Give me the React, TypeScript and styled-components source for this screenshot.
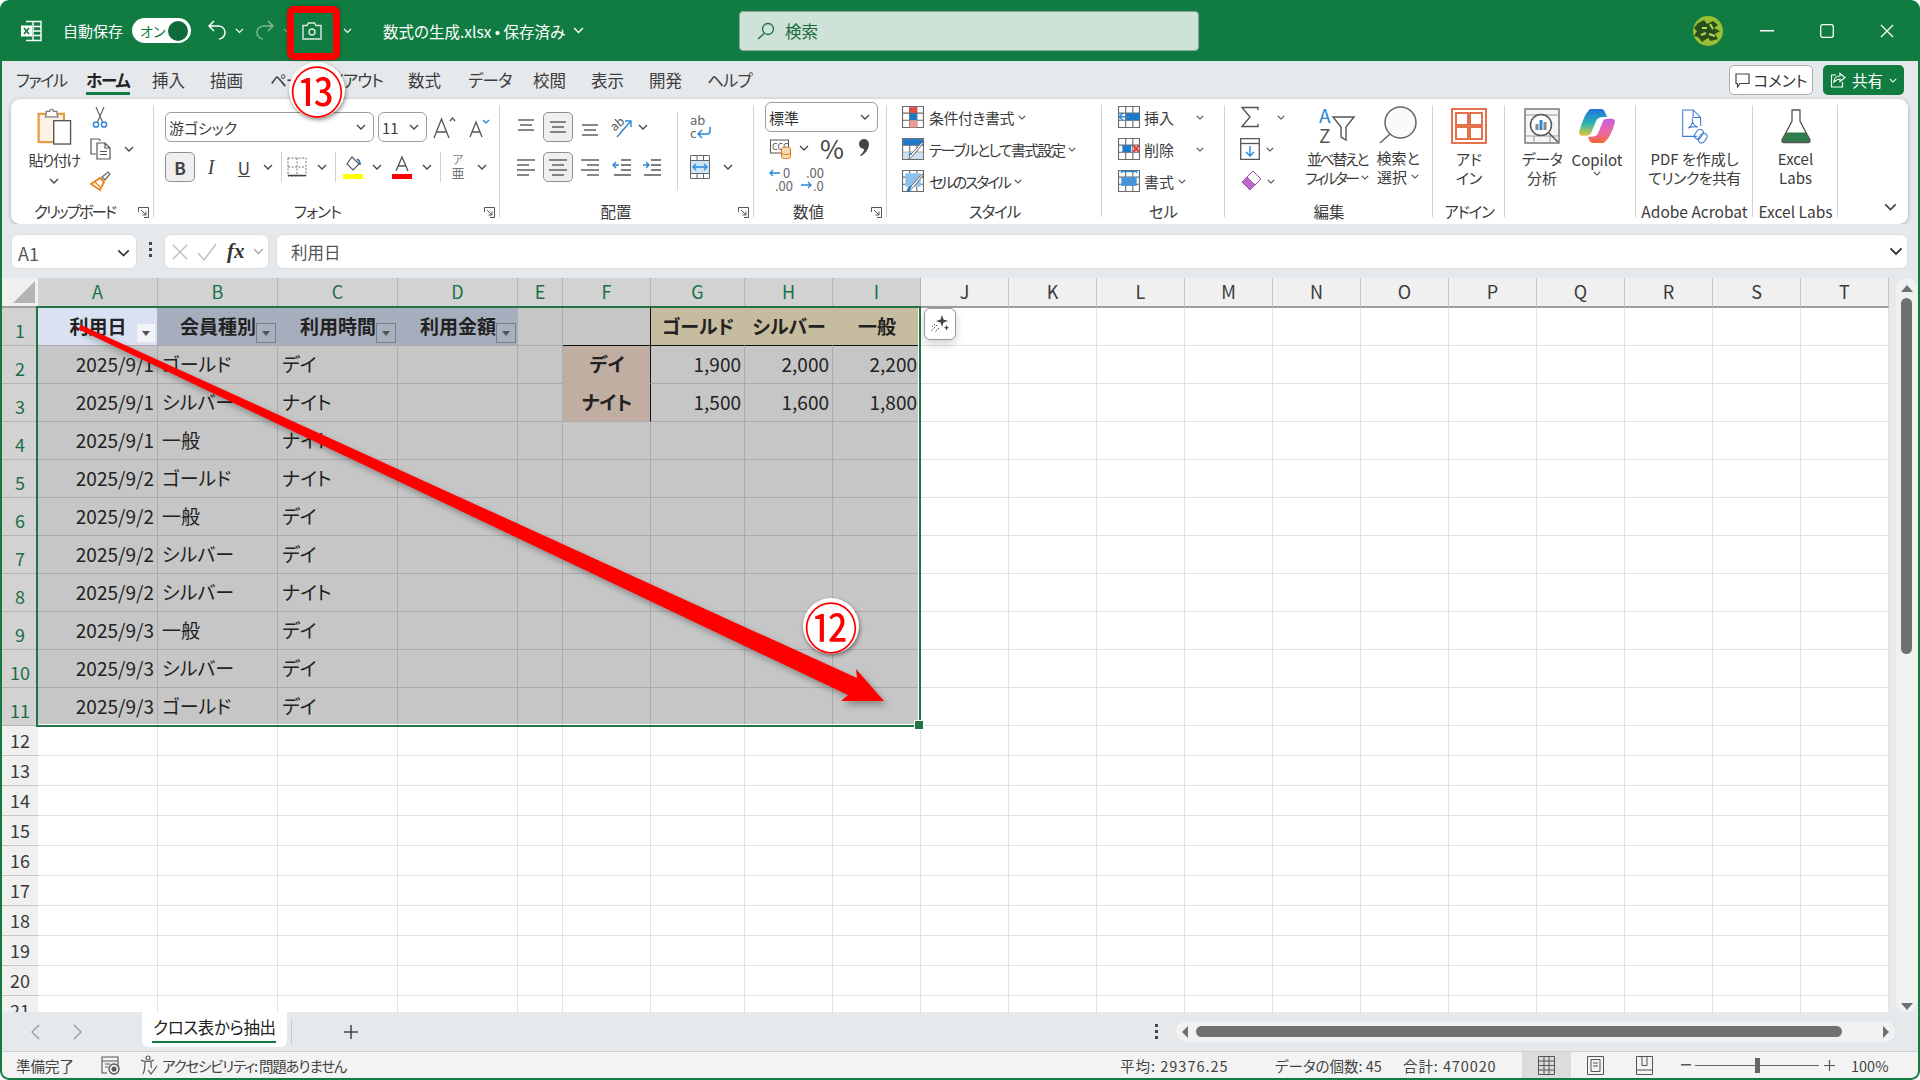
import React from 'react'
import styled, { createGlobalStyle } from 'styled-components'

const GlobalStyle = createGlobalStyle`
    html, body {
        margin: 0;
        padding: 0;
        background: #fff;
    }
    body {
        font-family: "Noto Sans CJK JP", "Noto Sans", sans-serif;
        font-feature-settings: "palt";
        color: #333;
    }
    * {
        box-sizing: border-box;
    }
    svg {
        display: block;
        flex: none;
        overflow: visible;
    }
`

const GREEN = '#107c41'
const CHROME = '#e6e9eb'

const Page = styled.div`
    position: relative;
    width: 1920px;
    height: 1080px;
    overflow: hidden;
`

const Window = styled.div`
    display: flex;
    flex-direction: column;
    width: 100%;
    height: 100%;
    padding: 0 2px 2px;
    background: ${GREEN};
    border-radius: 9px;
`

/* kana in the reference font is narrower, this pulls it in */
const Tight = styled.span<{ $ls: number }>`
    letter-spacing: ${p => p.$ls}px;
`

/* title bar */
const TitleBar = styled.header`
    display: flex;
    align-items: center;
    flex: none;
    height: 61px;
    color: #fff;
    font-size: 15px;
`

const TitleItem = styled.div<{ $left?: number; $w?: number; $dim?: boolean; $start?: boolean }>`
    display: flex;
    align-items: center;
    justify-content: ${p => (p.$w && !p.$start ? 'center' : 'flex-start')};
    flex: none;
    gap: 8px;
    width: ${p => (p.$w ? `${p.$w}px` : 'auto')};
    margin-left: ${p => p.$left || 0}px;
    opacity: ${p => (p.$dim ? 0.45 : 1)};
    white-space: nowrap;
`

const DocName = styled.span`
    font-size: 15.5px;
`

const Toggle = styled.div`
    display: flex;
    align-items: center;
    justify-content: space-between;
    flex: none;
    width: 59px;
    height: 25px;
    margin-left: 9px;
    padding: 0 3px 0 8px;
    color: ${GREEN};
    font-size: 14px;
    background: #fff;
    border-radius: 13px;
    i {
        width: 20px;
        height: 20px;
        background: #0e6b39;
        border-radius: 50%;
    }
`

const SearchBox = styled.div`
    display: flex;
    align-items: center;
    gap: 10px;
    flex: none;
    width: 460px;
    height: 40px;
    padding-left: 17px;
    color: #1c6b41;
    font-size: 16.5px;
    background: #cfe2d7;
    border: 1px solid #8ba598;
    border-radius: 4px;
`

/* tab row */
const TabRow = styled.nav`
    display: flex;
    align-items: center;
    flex: none;
    height: 38px;
    padding-left: 14px;
    background: ${CHROME};
`

const Tab = styled.div<{ $active?: boolean; $w: number; $ls?: number }>`
    position: relative;
    flex: none;
    width: ${p => p.$w}px;
    height: 38px;
    font-size: 16.5px;
    line-height: 38px;
    letter-spacing: ${p => p.$ls || 0}px;
    font-weight: ${p => (p.$active ? 700 : 400)};
    color: ${p => (p.$active ? '#222' : '#3c3c3c')};
    white-space: nowrap;
    &::after {
        content: "";
        display: ${p => (p.$active ? 'block' : 'none')};
        position: absolute;
        left: 0;
        width: 44px;
        bottom: 4px;
        height: 3px;
        background: ${GREEN};
    }
`

const RowActions = styled.div`
    display: flex;
    gap: 10px;
    margin-left: auto;
    margin-right: 14px;
`

const CommentBtn = styled.div`
    display: flex;
    align-items: center;
    justify-content: center;
    gap: 4px;
    width: 84px;
    height: 30px;
    font-size: 15.5px;
    color: #333;
    background: #fff;
    border: 1px solid #a9adb0;
    border-radius: 5px;
`

const ShareBtn = styled(CommentBtn)`
    width: 81px;
    gap: 6px;
    color: #fff;
    background: ${GREEN};
    border: none;
`

/* ribbon */
const RibbonWrap = styled.div`
    flex: none;
    height: 125px;
    padding: 0 10px 0 9px;
    background: ${CHROME};
`

const Ribbon = styled.section`
    display: flex;
    height: 125px;
    padding-top: 2px;
    background: #fff;
    border-radius: 9px;
    box-shadow: 0 1px 4px rgba(0, 0, 0, 0.25);
`

const Group = styled.div<{ $w: number; $noline?: boolean }>`
    position: relative;
    display: flex;
    flex-direction: column;
    flex: none;
    width: ${p => p.$w}px;
    height: 122px;
    &::after {
        content: "";
        display: ${p => (p.$noline ? 'none' : 'block')};
        position: absolute;
        right: 0;
        top: 4px;
        width: 1px;
        height: 112px;
        background: #d2d2d2;
    }
`

const Body = styled.div<{ $pl?: number; $pt?: number }>`
    display: flex;
    flex: none;
    height: 100px;
    padding-left: ${p => p.$pl || 0}px;
    padding-top: ${p => p.$pt || 0}px;
`

const GroupLabel = styled.div<{ $ls?: number; $pr?: number }>`
    height: 20px;
    padding-right: ${p => p.$pr || 0}px;
    font-size: 15.5px;
    line-height: 20px;
    letter-spacing: ${p => p.$ls || 0}px;
    text-align: center;
    white-space: nowrap;
    color: #3c3c3c;
`

const Launcher = styled.div`
    position: absolute;
    right: 5px;
    bottom: 5px;
`

const MoreChevron = styled(Launcher)`
    right: 12px;
    bottom: 12px;
`

const Column = styled.div<{ $w?: number; $gap?: number }>`
    display: flex;
    flex-direction: column;
    flex: none;
    gap: ${p => p.$gap || 0}px;
    width: ${p => (p.$w ? `${p.$w}px` : 'auto')};
`

const RuledColumn = styled(Column)`
    height: 78px;
    padding-left: 10px;
    border-left: 1px solid #d2d2d2;
`

const Line = styled.div<{ $h?: number }>`
    display: flex;
    align-items: center;
    flex: none;
    height: ${p => p.$h || 32}px;
    font-size: 15px;
    white-space: nowrap;
    color: #3c3c3c;
`

const Slot = styled.div<{ $w: number; $on?: boolean; $ml?: number }>`
    display: flex;
    align-items: center;
    justify-content: center;
    flex: none;
    width: ${p => p.$w}px;
    height: 30px;
    margin-left: ${p => p.$ml || 0}px;
    color: #444;
    background: ${p => (p.$on ? '#efefef' : 'transparent')};
    border: ${p => (p.$on ? '1px solid #8f8f8f' : 'none')};
    border-radius: 5px;
    font-size: 15px;
`

const Divider = styled.div<{ $ml?: number }>`
    flex: none;
    width: 1px;
    height: 30px;
    margin-left: ${p => p.$ml || 0}px;
    background: #d2d2d2;
`

const Select = styled.div<{ $w: number; $ml?: number }>`
    display: flex;
    align-items: center;
    justify-content: space-between;
    flex: none;
    width: ${p => p.$w}px;
    height: 30px;
    margin-left: ${p => p.$ml || 0}px;
    padding: 0 7px 0 3px;
    font-size: 15px;
    background: #fff;
    border: 1px solid #9e9e9e;
    border-radius: 6px;
`

const Big = styled.div<{ $w: number; $pt?: number; $ml?: number }>`
    display: flex;
    flex-direction: column;
    align-items: center;
    flex: none;
    width: ${p => p.$w}px;
    margin-left: ${p => p.$ml || 0}px;
    padding-top: ${p => (p.$pt === undefined ? 7 : p.$pt)}px;
    font-size: 15px;
    line-height: 19px;
    text-align: center;
    color: #3c3c3c;
    white-space: nowrap;
`

const BigIcon = styled.div`
    display: flex;
    align-items: center;
    justify-content: center;
    height: 36px;
    margin-bottom: 5px;
`

const BigNote = styled.span<{ $mt: number }>`
    margin-top: ${p => p.$mt}px;
`

const Inline = styled.span<{ $ml?: number; $w?: number }>`
    display: inline-flex;
    align-items: center;
    gap: 4px;
    margin-left: ${p => p.$ml || 0}px;
    width: ${p => (p.$w ? `${p.$w}px` : 'auto')};
`

const PctGlyph = styled.span`
    font-size: 26px;
    line-height: 30px;
    color: #444;
`

const BoldGlyph = styled.b`
    font-size: 17px;
`

const ItalicGlyph = styled.i`
    font-family: "Liberation Serif", serif;
    font-size: 20px;
`

const UnderGlyph = styled.u`
    font-size: 17px;
`

/* formula bar */
const FormulaBar = styled.div`
    display: flex;
    align-items: flex-start;
    flex: none;
    height: 54px;
    padding: 10px 10px 0 9px;
    background: ${CHROME};
`

const FormulaBox = styled.div`
    display: flex;
    align-items: center;
    height: 35px;
    background: #fff;
    border: 1px solid #dcdfe1;
    border-radius: 7px;
    font-size: 16.5px;
    color: #555;
`

const NameBox = styled(FormulaBox)`
    justify-content: space-between;
    flex: none;
    width: 126px;
    padding: 3px 6px 0;
    font-size: 18px;
`

const FnBox = styled(FormulaBox)`
    flex: none;
    gap: 8px;
    width: 105px;
    padding: 0 6px;
    i {
        margin-left: 2px;
        font-family: "Liberation Serif", serif;
        font-weight: 700;
        font-size: 21px;
        color: #333;
    }
`

const InputBox = styled(FormulaBox)`
    justify-content: space-between;
    flex: 1;
    margin-left: 7px;
    padding: 0 4px 0 14px;
`

const Dots = styled.div<{ $w: number }>`
    display: flex;
    flex-direction: column;
    align-items: center;
    justify-content: center;
    gap: 3px;
    flex: none;
    width: ${p => p.$w}px;
    min-height: 30px;
    i {
        width: 3px;
        height: 3px;
        background: #444;
    }
`

/* sheet grid */
const SheetArea = styled.div`
    display: flex;
    flex: none;
    height: 734px;
    background: ${CHROME};
`

const GridClip = styled.div`
    position: relative;
    flex: none;
    width: 1887px;
    height: 734px;
    overflow: hidden;
    background: #fff;
`

const COLS = ['A', 'B', 'C', 'D', 'E', 'F', 'G', 'H', 'I', 'J', 'K', 'L', 'M', 'N', 'O', 'P', 'Q', 'R', 'S', 'T']
const COL_W = [120, 120, 120, 120, 45, 88, 94, 88, 88, 88, 88, 88, 88, 88, 88, 88, 88, 88, 88, 88]

const Grid = styled.div`
    display: grid;
    grid-template-columns: 36px ${COL_W.map(w => `${w}px`).join(' ')};
    grid-template-rows: 30px repeat(11, 38px) repeat(10, 30px);
    font-size: 19px;
`

const Corner = styled.div`
    display: flex;
    align-items: flex-end;
    justify-content: flex-end;
    padding: 0 3px 3px 0;
    background: #f0f0f0;
    border-bottom: 2px solid #9e9e9e;
    i {
        width: 0;
        height: 0;
        border-left: 22px solid transparent;
        border-bottom: 22px solid #b4b4b4;
    }
`

const ColHead = styled.div<{ $sel: boolean }>`
    display: flex;
    align-items: center;
    justify-content: center;
    padding-bottom: 2px;
    font-size: 18px;
    color: ${p => (p.$sel ? '#1c6e46' : '#3a3a3a')};
    background: ${p => (p.$sel ? '#d2d2d2' : '#f0f0f0')};
    border-right: 1px solid ${p => (p.$sel ? '#b4b4b4' : '#c6c6c6')};
    border-bottom: 2px solid ${p => (p.$sel ? '#217346' : '#9e9e9e')};
`

const RowHead = styled.div<{ $sel: boolean }>`
    display: flex;
    align-items: flex-end;
    justify-content: center;
    padding-bottom: 2px;
    font-size: 18px;
    line-height: 26px;
    color: ${p => (p.$sel ? '#1c6e46' : '#3a3a3a')};
    background: ${p => (p.$sel ? '#d2d2d2' : '#f0f0f0')};
    border-bottom: 1px solid ${p => (p.$sel ? '#b4b4b4' : '#c6c6c6')};
`

const Cell = styled.div<{ $bg: string; $line: string; $align: string; $bold?: boolean; $rule?: string }>`
    position: relative;
    display: flex;
    align-items: center;
    justify-content: ${p => p.$align};
    padding: 0 3px 2px 4px;
    overflow: visible;
    white-space: nowrap;
    color: #222;
    font-weight: ${p => (p.$bold ? 700 : 400)};
    background: ${p => p.$bg};
    border-right: 1px solid ${p => p.$line};
    border-bottom: 1px solid ${p => p.$line};
    ${p => p.$rule || ''}
`

const FilterBtn = styled.span<{ $first?: boolean }>`
    position: absolute;
    right: 1px;
    bottom: 2px;
    display: flex;
    align-items: center;
    justify-content: center;
    width: 20px;
    height: 20px;
    background: ${p => (p.$first ? '#f2f4f8' : '#a8afbe')};
    border: 1px solid ${p => (p.$first ? '#d9e1f2' : '#7b7f88')};
    &::after {
        content: "";
        border-left: 4px solid transparent;
        border-right: 4px solid transparent;
        border-top: 5px solid #555;
    }
`

const Selection = styled.div`
    position: absolute;
    left: 34px;
    top: 28px;
    width: 885px;
    height: 421px;
    border: 2px solid #217346;
    box-shadow: inset -1px -1px 0 #fff;
    pointer-events: none;
    &::after {
        content: "";
        position: absolute;
        right: -5px;
        bottom: -5px;
        width: 8px;
        height: 8px;
        background: #217346;
        border: 1px solid #fff;
    }
`

const QuickBtn = styled.div`
    position: absolute;
    left: 922px;
    top: 30px;
    display: flex;
    align-items: center;
    justify-content: center;
    width: 32px;
    height: 32px;
    background: #fff;
    border: 1px solid #9a9a9a;
    border-radius: 6px;
    box-shadow: 0 4px 10px rgba(0, 0, 0, 0.18);
`

const VScroll = styled.div`
    display: flex;
    flex-direction: column;
    align-items: center;
    flex: none;
    width: 21px;
    height: 734px;
    margin-left: 7px;
    padding: 7px 0 2px;
    background: #f1f1f1;
    border-radius: 10px;
`

const VThumb = styled.div`
    flex: none;
    width: 11px;
    height: 356px;
    margin-top: 6px;
    margin-bottom: auto;
    background: #707070;
    border-radius: 6px;
`

const Arrowhead = styled.i<{ $dir: 'up' | 'down' | 'left' | 'right' }>`
    display: block;
    flex: none;
    width: 0;
    height: 0;
    ${p => p.$dir === 'up' && 'border-left: 6px solid transparent; border-right: 6px solid transparent; border-bottom: 7px solid #707070;'}
    ${p => p.$dir === 'down' && 'border-left: 6px solid transparent; border-right: 6px solid transparent; border-top: 7px solid #707070;'}
    ${p => p.$dir === 'left' && 'border-top: 6px solid transparent; border-bottom: 6px solid transparent; border-right: 6px solid #707070;'}
    ${p => p.$dir === 'right' && 'border-top: 6px solid transparent; border-bottom: 6px solid transparent; border-left: 6px solid #707070;'}
`

/* sheet tabs */
const SheetBar = styled.div`
    display: flex;
    align-items: center;
    flex: none;
    height: 40px;
    background: ${CHROME};
    border-bottom: 1px solid #cfcfcf;
`

const NavSlot = styled.div<{ $w: number; $left?: number }>`
    display: flex;
    justify-content: center;
    flex: none;
    width: ${p => p.$w}px;
    margin-left: ${p => p.$left || 0}px;
`

const SheetTab = styled.div`
    position: relative;
    flex: none;
    align-self: flex-start;
    width: 145px;
    height: 35px;
    margin-left: 58px;
    padding-top: 2px;
    font-size: 16.5px;
    line-height: 26px;
    letter-spacing: -0.4px;
    text-align: center;
    color: #222;
    background: #fff;
    border-radius: 0 0 7px 7px;
    &::after {
        content: "";
        position: absolute;
        left: 10px;
        right: 11px;
        bottom: 4px;
        height: 2px;
        background: ${GREEN};
    }
`

const TabDivider = styled.div`
    flex: none;
    width: 1px;
    height: 25px;
    margin-left: 4px;
    background: #c8c8c8;
`

const HScroll = styled.div`
    display: flex;
    align-items: center;
    justify-content: space-between;
    flex: none;
    width: 719px;
    height: 21px;
    margin-left: 15px;
    padding: 0 6px;
    background: #f1f1f1;
    border-radius: 10px;
`

const HThumb = styled.div`
    flex: none;
    width: 646px;
    height: 11px;
    margin-left: 8px;
    margin-right: auto;
    background: #707070;
    border-radius: 6px;
`

/* status bar */
const StatusBar = styled.footer`
    display: flex;
    align-items: center;
    flex: none;
    height: 26px;
    font-size: 14.5px;
    color: #444;
    background: #f3f3f3;
    border-radius: 0 0 7px 7px;
`

const StatusItem = styled.div<{ $left?: number; $w?: number }>`
    display: flex;
    align-items: center;
    flex: none;
    gap: 4px;
    margin-left: ${p => p.$left || 0}px;
    width: ${p => (p.$w ? `${p.$w}px` : 'auto')};
    white-space: nowrap;
`

const ViewBtn = styled.div<{ $on?: boolean }>`
    display: flex;
    align-items: center;
    justify-content: center;
    flex: none;
    width: 49px;
    height: 26px;
    background: ${p => (p.$on ? '#dcdcdc' : 'transparent')};
`

const Slider = styled.div`
    position: relative;
    flex: none;
    width: 124px;
    height: 1px;
    margin: 0 5px 0 4px;
    background: #666;
    &::after {
        content: "";
        position: absolute;
        left: 60px;
        top: -7px;
        width: 5px;
        height: 15px;
        background: #666;
    }
`

/* annotations */
const RedFrame = styled.div`
    position: absolute;
    left: 287px;
    top: 6px;
    width: 53px;
    height: 54px;
    border: 7px solid #f00;
    border-radius: 7px;
    box-shadow: 0 0 3px rgba(0, 0, 0, 0.35);
`

const StepBadge = styled.div<{ $x: number; $y: number }>`
    position: absolute;
    left: ${p => p.$x - 28}px;
    top: ${p => p.$y - 28}px;
    display: flex;
    align-items: center;
    justify-content: center;
    width: 56px;
    height: 56px;
    font-size: 54px;
    line-height: 56px;
    color: #f00;
    background: #fff;
    border-radius: 50%;
    box-shadow: 1px 2px 4px rgba(0, 0, 0, 0.45);
`

const ArrowLayer = styled.svg`
    position: absolute;
    left: 0;
    top: 0;
    filter: drop-shadow(3px 4px 3px rgba(0, 0, 0, 0.3));
`

/* icons */
const Chevron = ({ c = '#444', w = 10 }: { c?: string; w?: number }) => (
    <svg width={w} height={w * 0.6} viewBox="0 0 10 6">
        <path d="M1 1l4 4 4-4" fill="none" stroke={c} strokeWidth="1.3" />
    </svg>
)

const LauncherIcon = () => (
    <svg width="11" height="11" viewBox="0 0 11 11" fill="none" stroke="#555">
        <path d="M.5 5V.5H10.500V10.500H6M3 3l5 5M8 4.500V8H4.500" />
    </svg>
)

const Lines = ({ items }: { items: number[][] }) => (
    <svg width="20" height="20" viewBox="0 0 20 20" stroke="#555" strokeWidth="1.4">
        {items.map(([a, b, y], i) => (
            <line key={i} x1={a} x2={b} y1={y} y2={y} />
        ))}
    </svg>
)

const Table = ({ children, size = 22 }: { children?: React.ReactNode; size?: number }) => (
    <svg width={size} height={size} viewBox="0 0 20 20" fill="none">
        <path d="M.5.5h19v19H.5zM.5 6.500h19M.5 13h19M7 .5v19M13.500 .5v19" stroke="#6b6b6b" />
        {children}
    </svg>
)

const ExcelLogo = () => (
    <svg width="22" height="22" viewBox="0 0 22 22" fill="none">
        <path d="M6 1.500h15v19H6" stroke="#fff" strokeWidth="1.400" />
        <path d="M13 1.500v19M13 6.500h8M13 11h8M13 15.500h8" stroke="#fff" strokeWidth="1.400" />
        <rect x="1" y="5.500" width="11" height="11" fill="#fff" />
        <path d="M4 8l5 6M9 8l-5 6" stroke="#107c41" strokeWidth="1.700" />
    </svg>
)

const UndoIcon = () => (
    <svg width="20" height="24" viewBox="0 0 20 24" fill="none" stroke="#fff" strokeWidth="1.500">
        <path d="M7 2L2 7l5 5M2 7h9a6.500 6.500 0 0 1 1 13" />
    </svg>
)

const RedoIcon = () => (
    <svg width="20" height="24" viewBox="0 0 20 24" fill="none" stroke="#fff" strokeWidth="1.500">
        <path d="M13 2l5 5-5 5M18 7H9a6.500 6.500 0 0 0-1 13" />
    </svg>
)

const CameraIcon = () => (
    <svg width="20" height="18" viewBox="0 0 20 18" fill="none" stroke="#dfe9e3" strokeWidth="1.400">
        <path d="M1 3.500h4l1.500-2.500h6L14 3.500h5v13.500H1z" />
        <circle cx="10" cy="10" r="3" />
    </svg>
)

const MagnifierIcon = () => (
    <svg width="18" height="18" viewBox="0 0 18 18" fill="none" stroke="#1c6b41" strokeWidth="1.300">
        <circle cx="11" cy="7" r="5.500" />
        <path d="M7 11.500L1 17" />
    </svg>
)

const AvatarIcon = () => (
    <svg width="30" height="30" viewBox="0 0 30 30">
        <circle cx="15" cy="15" r="15" fill="#9abf34" />
        <path d="M5 7l6-3 3 4 6-3 5 4-4 3 6 3-5 3 3 5-7 2-3-3-6 4-4-5-4-1 3-5-3-3z" fill="#274f1c" />
        <path d="M9 12h5M17 8l3 5M8 19l5-2M16 18l6 2" stroke="#b7d660" strokeWidth="2" />
    </svg>
)

const WinMin = () => (
    <svg width="14" height="2" viewBox="0 0 14 2"><rect width="14" height="1.500" fill="#fff" /></svg>
)

const WinMax = () => (
    <svg width="14" height="14" viewBox="0 0 14 14" fill="none" stroke="#fff" strokeWidth="1.300"><rect x=".7" y=".7" width="12.600" height="12.600" rx="2" /></svg>
)

const WinClose = () => (
    <svg width="14" height="14" viewBox="0 0 14 14" stroke="#fff" strokeWidth="1.300"><path d="M1 1l12 12M13 1L1 13" /></svg>
)

const CommentIcon = () => (
    <svg width="15" height="15" viewBox="0 0 15 15" fill="none" stroke="#444" strokeWidth="1.200"><path d="M1 1h13v9.500H5L2.500 14v-3.500H1z" /></svg>
)

const ShareIcon = () => (
    <svg width="16" height="16" viewBox="0 0 16 16" fill="none" stroke="#fff" strokeWidth="1.200"><path d="M6 3H1.500v12h11v-5M4 10c0-4 3-6 6-6V1.500L15 5.500l-5 4V7c-2 0-4 1-6 3z" /></svg>
)

const PasteIcon = () => (
    <svg width="35" height="37" viewBox="0 0 35 38">
        <rect x="1.200" y="6" width="26" height="29" fill="#fbf3e4" stroke="#e8993c" strokeWidth="2.200" />
        <path d="M9 6V3.500h3.500a2 2 0 0 1 4 0H20V6l1 3H8z" fill="#fff" stroke="#7d7d7d" strokeWidth="1.300" />
        <rect x="16.700" y="13" width="17.300" height="24" fill="#fff" stroke="#555" strokeWidth="1.400" />
    </svg>
)

const ScissorsIcon = () => (
    <svg width="16" height="22" viewBox="0 0 16 22" fill="none">
        <path d="M4 1l6.500 15M12 1L5.500 16" stroke="#666" strokeWidth="1.200" />
        <circle cx="4" cy="18.500" r="2.600" stroke="#2b88d8" strokeWidth="1.500" />
        <circle cx="12" cy="18.500" r="2.600" stroke="#2b88d8" strokeWidth="1.500" />
    </svg>
)

const CopyIcon = () => (
    <svg width="21" height="22" viewBox="0 0 21 22" fill="none" stroke="#555" strokeWidth="1.200">
        <path d="M6 16H1V1h8l1.500 2" />
        <path d="M7 5h8l5 5v11H7zM15 5v5h5M10 13.500h7M10 16.500h7" />
    </svg>
)

const BrushIcon = () => (
    <svg width="22" height="22" viewBox="0 0 22 22" fill="none">
        <path d="M13 7l3 3 5-6-2-2z" fill="#fff" stroke="#666" strokeWidth="1.200" />
        <path d="M11 8l4 4-4 8-9-6z" fill="#fff" stroke="#e8811a" strokeWidth="1.800" />
        <path d="M6 12l5 5" stroke="#e8811a" strokeWidth="1.200" />
    </svg>
)

const GrowIcon = ({ down }: { down?: boolean }) => (
    <svg width="24" height="24" viewBox="0 0 24 24" fill="none" stroke="#555" strokeWidth="1.300">
        {down ? <path d="M4 22L10 7l6 15M6 17h8" /> : <path d="M2 23L9.500 4 17 23M4.500 17h10" />}
        <path d={down ? 'M17 5l3 3 3-3' : 'M18 6l2.500-3 2.500 3'} stroke={down ? '#2b88d8' : '#555'} />
    </svg>
)

const BorderIcon = () => (
    <svg width="20" height="20" viewBox="0 0 20 20" fill="none">
        <path d="M1 1h18v18H1zM10 1v18M1 10h18" stroke="#777" strokeDasharray="2 1.500" />
        <path d="M1 18.500h18" stroke="#444" strokeWidth="1.500" />
    </svg>
)

const FillIcon = () => (
    <svg width="20" height="24" viewBox="0 0 20 24">
        <path d="M9 2l7 7-6 6-6-6z" fill="none" stroke="#555" strokeWidth="1.200" />
        <path d="M14 4c2 1 3 3 3 6" fill="none" stroke="#2b72b8" strokeWidth="1.800" />
        <rect y="19" width="20" height="5" fill="#ffff00" />
    </svg>
)

const FontColorIcon = () => (
    <svg width="20" height="24" viewBox="0 0 20 24" fill="none">
        <path d="M4 16L10 2l6 14M6 11h8" stroke="#555" strokeWidth="1.300" />
        <rect y="19" width="20" height="5" fill="#f00" />
    </svg>
)

const PhoneticIcon = () => (
    <svg width="20" height="26" viewBox="0 0 20 26">
        <text x="10" y="10" fontSize="11" fill="#777" textAnchor="middle">ア</text>
        <text x="10" y="24" fontSize="13" fill="#777" textAnchor="middle">亜</text>
    </svg>
)

const OrientIcon = () => (
    <svg width="24" height="24" viewBox="0 0 24 24" fill="none">
        <text x="1" y="13" fontSize="12" fill="#555" transform="rotate(-40 8 10)">ab</text>
        <path d="M7 22L20 7M15 6h6v6" stroke="#2b88d8" strokeWidth="1.400" />
    </svg>
)

const IndentIcon = ({ out }: { out?: boolean }) => (
    <svg width="20" height="20" viewBox="0 0 20 20" fill="none" strokeWidth="1.400">
        <path d="M9 3h10M9 8h10M9 13h10M2 18h17" stroke="#555" />
        <path d={out ? 'M7 8H1M4 5L1 8l3 3' : 'M1 8h6M4 5l3 3-3 3'} stroke="#2b88d8" />
    </svg>
)

const WrapIcon = () => (
    <svg width="24" height="26" viewBox="0 0 24 26" fill="none">
        <text x="2" y="11" fontSize="13" fill="#666">ab</text>
        <text x="2" y="24" fontSize="13" fill="#666">c</text>
        <path d="M22 13v4a3 3 0 0 1-3 3h-8M14 16l-4 4 4 4" stroke="#2b88d8" strokeWidth="1.500" />
    </svg>
)

const MergeIcon = () => (
    <svg width="20" height="24" viewBox="0 0 20 24" fill="none">
        <path d="M.5.5h19v23H.5zM.5 5.500h19M.5 18.500h19M7 .5v5M13.500 .5v5M7 18.500v5M13.500 18.500v5" stroke="#666" />
        <rect x="1" y="6" width="18" height="12" fill="#cde6f7" />
        <path d="M3 12h14M6 9l-3 3 3 3M14 9l3 3-3 3" stroke="#2b88d8" strokeWidth="1.300" />
    </svg>
)

const CurrencyIcon = () => (
    <svg width="22" height="24" viewBox="0 0 22 24" fill="none">
        <rect x=".5" y="4" width="18" height="13" stroke="#555" />
        <text x="2" y="14" fontSize="9" fill="#555">CCC</text>
        <ellipse cx="16" cy="13" rx="4.500" ry="2" fill="#f6dcb4" stroke="#e07b14" />
        <path d="M11.500 13v8c0 2 9 2 9 0v-8M11.500 17c0 2 9 2 9 0" fill="#f6dcb4" stroke="#e07b14" />
    </svg>
)

const CommaIcon = () => (
    <svg width="14" height="22" viewBox="0 0 14 22">
        <path d="M7 2a5 5 0 0 1 5 5c0 5-4 10-8 12l-1-1c3-2 4-4 4-6a5 5 0 0 1 0-10z" fill="#444" />
    </svg>
)

const DecimalIcon = ({ more }: { more?: boolean }) => (
    <svg width="24" height="26" viewBox="0 0 24 26" fill="none">
        <text x={more ? 6 : 14} y="11" fontSize="13" fill="#666">{more ? '.00' : '0'}</text>
        <text x={more ? 13 : 6} y="24" fontSize="13" fill="#666">{more ? '.0' : '.00'}</text>
        <path d={more ? 'M1 18h10M8 15l3 3-3 3' : 'M11 6H1M4 3L1 6l3 3'} stroke="#2b88d8" strokeWidth="1.300" />
    </svg>
)

const CondIcon = () => (
    <Table>
        <rect x="7" y="1" width="6.500" height="5.500" fill="#e5483f" />
        <rect x="7" y="6.500" width="6.500" height="6.500" fill="#1f78c8" />
        <rect x="7" y="13" width="6.500" height="6.500" fill="#f29a97" />
    </Table>
)

const TableFmtIcon = () => (
    <Table>
        <rect x="1" y="1" width="18" height="5.500" fill="#1f78c8" />
        <rect x="1" y="13" width="18" height="6" fill="#cde0f2" />
        <path d="M20 4L9 17l-3 3 1-4L18 4z" fill="#fff" stroke="#555" strokeWidth=".8" />
        <path d="M9 15l-3 1 1-3z" fill="#1f78c8" />
    </Table>
)

const CellStyleIcon = () => (
    <Table>
        <rect x="3" y="3" width="14" height="12" fill="#8ec0ea" />
        <path d="M20 4L9 17l-3 3 1-4L18 4z" fill="#fff" stroke="#555" strokeWidth=".8" />
        <path d="M9 15l-3 5-2-1 2-4z" fill="#1f78c8" />
    </Table>
)

const InsertIcon = () => (
    <Table>
        <rect x="7" y="6.500" width="13" height="6.500" fill="#1f78c8" />
        <path d="M11 9.700H1M4.500 6.500L1 9.700 4.500 13" stroke="#2b88d8" strokeWidth="1.300" />
    </Table>
)

const DeleteIcon = () => (
    <Table>
        <rect x="4" y="6.500" width="8" height="6.500" fill="#1f78c8" />
        <path d="M14 7l5 5.500M19 7l-5 5.500" stroke="#e5312b" strokeWidth="1.800" />
    </Table>
)

const FormatIcon = () => (
    <Table>
        <rect x="3" y="6.500" width="14" height="8" fill="#4a94d8" />
        <path d="M3 0v3M17 0v3M3 1.500h14" stroke="#2b88d8" />
    </Table>
)

const SumIcon = () => (
    <svg width="20" height="22" viewBox="0 0 20 22" fill="none" stroke="#555" strokeWidth="1.400">
        <path d="M18 4V1.500H2L10 11 2 20.500h16V18" />
    </svg>
)

const FillDownIcon = () => (
    <svg width="20" height="22" viewBox="0 0 20 22" fill="none">
        <path d="M.7.700h18.600v20.600H.7z" stroke="#555" strokeWidth="1.300" />
        <path d="M1 5.500h18" stroke="#555" strokeWidth="1.300" />
        <path d="M10 8v10M6 14l4 4 4-4" stroke="#2b88d8" strokeWidth="1.400" />
    </svg>
)

const EraserIcon = () => (
    <svg width="22" height="22" viewBox="0 0 22 22">
        <path d="M13 1l8 8-6 6-8-8z" fill="#fff" stroke="#a24ab0" />
        <path d="M7 7l8 8-5 5-8-8z" fill="#bb6bc9" stroke="#a24ab0" />
    </svg>
)

const SortIcon = () => (
    <svg width="36" height="36" viewBox="0 0 36 36" fill="none">
        <text x="0" y="15" fontSize="19" fill="#2b88d8">A</text>
        <text x="0" y="35" fontSize="19" fill="#555">Z</text>
        <path d="M14 9h21l-8 10v13l-5-3V19z" stroke="#555" strokeWidth="1.400" />
    </svg>
)

const SearchBigIcon = () => (
    <svg width="38" height="38" viewBox="0 0 38 38" fill="none">
        <circle cx="21.500" cy="16.500" r="15.500" fill="#fafafa" stroke="#666" strokeWidth="1.500" />
        <path d="M11 28L1 37" stroke="#666" strokeWidth="1.600" />
    </svg>
)

const AddinIcon = () => (
    <svg width="36" height="36" viewBox="0 0 36 36" fill="none" stroke="#e2633a" strokeWidth="1.800">
        <rect x="1" y="1" width="34" height="34" />
        <rect x="5" y="5" width="12" height="12" />
        <rect x="19" y="5" width="12" height="12" />
        <rect x="5" y="19" width="12" height="12" />
        <rect x="19" y="19" width="12" height="12" />
    </svg>
)

const AnalysisIcon = () => (
    <svg width="36" height="36" viewBox="0 0 36 36" fill="none">
        <rect x="1" y="1" width="34" height="34" fill="#f5f5f5" stroke="#777" strokeWidth="1.500" />
        <path d="M1 7h34M1 28h34M10 28v7M26 28v7" stroke="#999" />
        <circle cx="17" cy="17" r="10.500" fill="#fff" stroke="#555" strokeWidth="1.500" />
        <path d="M25 25l9 9" stroke="#555" strokeWidth="1.500" />
        <rect x="11.500" y="16" width="3" height="6" fill="#888" />
        <rect x="15.500" y="12" width="3" height="10" fill="#2b88d8" />
        <rect x="19.500" y="14" width="3" height="8" fill="#888" />
    </svg>
)

const CopilotIcon = () => (
    <svg width="36" height="34" viewBox="0 0 36 42" preserveAspectRatio="none">
        <defs>
            <linearGradient id="cpa" x1="0" y1="0" x2="0" y2="1">
                <stop offset="0" stopColor="#1e6fe0" />
                <stop offset=".55" stopColor="#2bb8b0" />
                <stop offset="1" stopColor="#e5c73b" />
            </linearGradient>
            <linearGradient id="cpb" x1="0" y1="0" x2="0" y2="1">
                <stop offset="0" stopColor="#c45ee0" />
                <stop offset=".6" stopColor="#f06aa0" />
                <stop offset="1" stopColor="#f2682a" />
            </linearGradient>
        </defs>
        <path d="M12 0h10c2 0 3 1 4 4l2 6c-6-1-10 1-11 5l-5 15c-1 2-2 3-5 3H3c-2 0-3-2-3-4C2 20 6 6 9 3c1-2 2-3 3-3z" fill="url(#cpa)" />
        <path d="M24 42H14c-2 0-3-1-4-4l-1-4c5 1 9 0 10-4l5-15c1-2 2-3 5-3h4c2 0 3 2 3 4-2 9-5 19-9 23-1 2-2 3-3 3z" fill="url(#cpb)" />
    </svg>
)

const PdfIcon = () => (
    <svg width="28" height="34" viewBox="0 0 28 36" fill="none" stroke="#3a78d4" strokeWidth="1.100">
        <path d="M16 29H1V1h11l8 8v9M12 1v8h8" />
        <path d="M7 20c3-2 5-6 4-10 0 4 2 8 6 9-4-1-7 0-10 1z" />
        <rect x="15" y="21" width="7" height="11" rx="3.500" transform="rotate(35 18 26)" />
        <rect x="19" y="25" width="7" height="11" rx="3.500" transform="rotate(35 22 30)" />
    </svg>
)

const FlaskIcon = () => (
    <svg width="30" height="34" viewBox="0 0 30 34" fill="none">
        <path d="M5 24L1 31c-.500 1.500.5 2.500 2 2.500h24c1.500 0 2.500-1 2-2.500l-4-7z" fill="#2f7d4f" />
        <path d="M11 1h8v11l10 19c.5 1.500-.5 2.500-2 2.500H3c-1.500 0-2.500-1-2-2.500L11 12z" stroke="#555" strokeWidth="1.300" />
        <path d="M5 24h20" stroke="#2f7d4f" />
    </svg>
)

const SparkleIcon = () => (
    <svg width="20" height="20" viewBox="0 0 20 20">
        <path d="M12 1l1.500 4.500L18 7l-4.500 1.500L12 13l-1.500-4.500L6 7l4.500-1.500zM16.500 11l.8 2 2 .8-2 .8-.8 2-.8-2-2-.8 2-.8z" fill="#444" />
        <path d="M7 11l-6 6M9 14l-4 4M5 10l-3 3" stroke="#555" strokeDasharray="1.500 1" />
    </svg>
)

const XMark = () => (
    <svg width="18" height="18" viewBox="0 0 18 18" stroke="#bdbdbd" strokeWidth="1.400"><path d="M2 2l14 14M16 2L2 16" /></svg>
)

const CheckMark = () => (
    <svg width="20" height="18" viewBox="0 0 20 18" fill="none" stroke="#bdbdbd" strokeWidth="1.400"><path d="M1 10l6 7L19 1" /></svg>
)

const Nav = ({ right }: { right?: boolean }) => (
    <svg width="12" height="16" viewBox="0 0 12 16" fill="none" stroke="#9a9a9a" strokeWidth="1.300"><path d={right ? 'M3 1l7 7-7 7' : 'M9 1L2 8l7 7'} /></svg>
)

const PlusIcon = () => (
    <svg width="16" height="16" viewBox="0 0 16 16" stroke="#444" strokeWidth="1.500"><path d="M8 1v14M1 8h14" /></svg>
)

const MacroIcon = () => (
    <svg width="19" height="19" viewBox="0 0 19 19" fill="none" stroke="#555" strokeWidth="1.100">
        <path d="M6 17H1V1h16v9M1 5h16M4 8h5M4 11h3" />
        <circle cx="13" cy="13" r="5" fill="#f3f3f3" strokeWidth="1.400" />
        <circle cx="13" cy="13" r="2" fill="#555" />
    </svg>
)

const AccessIcon = () => (
    <svg width="18" height="20" viewBox="0 0 18 20" fill="none" stroke="#555" strokeWidth="1.200">
        <circle cx="8" cy="3" r="2" />
        <path d="M1 5c3 2 10 2 13 0M5 7c0 5 0 8-2 12M11 7c0 3 0 5 .5 6M8 15l3 4 6-8" />
    </svg>
)

const NormalView = () => (
    <svg width="17" height="19" viewBox="0 0 17 19" fill="none" stroke="#555"><path d="M.5.5h16v18H.5zM.5 5h16M.5 9.500h16M.5 14h16M6 .5v18M11 .5v18" /></svg>
)

const LayoutView = () => (
    <svg width="17" height="19" viewBox="0 0 17 19" fill="none" stroke="#555"><path d="M.5.5h16v18H.5zM4 3.500h9v12H4zM6 7h5M6 10h5" /></svg>
)

const PageView = () => (
    <svg width="17" height="19" viewBox="0 0 17 19" fill="none" stroke="#555"><path d="M.5.5h16v18H.5zM.5 14h16M6 .5v9h5v-9" /></svg>
)

const ZoomOut = () => (
    <svg width="10" height="2" viewBox="0 0 10 2"><rect width="10" height="1.500" fill="#555" /></svg>
)

const ZoomIn = () => (
    <svg width="11" height="11" viewBox="0 0 11 11" stroke="#555" strokeWidth="1.200"><path d="M5.500 0v11M0 5.500h11" /></svg>
)

/* sheet data */
const DATES = ['2025/9/1', '2025/9/1', '2025/9/1', '2025/9/2', '2025/9/2', '2025/9/2', '2025/9/2', '2025/9/3', '2025/9/3', '2025/9/3']
const KINDS = ['ゴールド', 'シルバー', '一般', 'ゴールド', '一般', 'シルバー', 'シルバー', '一般', 'シルバー', 'ゴールド']
const TIMES = ['デイ', 'ナイト', 'ナイト', 'ナイト', 'デイ', 'デイ', 'ナイト', 'デイ', 'デイ', 'デイ']
const HEAD: Record<string, string> = { A: '利用日', B: '会員種別', C: '利用時間', D: '利用金額', G: 'ゴールド', H: 'シルバー', I: '一般' }
const PRICES: Record<number, Record<string, string>> = {
    2: { G: '1,900', H: '2,000', I: '2,200' },
    3: { G: '1,500', H: '1,600', I: '1,800' },
}

const SheetCell = ({ row, col, idx }: { row: number; col: string; idx: number }) => {
    const inSel = row <= 11 && idx < 9
    let bg = inSel ? '#c6c6c6' : '#fff'
    let text: React.ReactNode = ''
    let align = 'flex-start'
    let bold = false
    let rule = ''
    let filter: React.ReactNode = null
    const line = inSel ? '#ababab' : '#e1e1e1'

    if (row === 1 && HEAD[col]) {
        text = HEAD[col]
        bold = true
        align = 'center'
        if (idx < 4) {
            bg = idx === 0 ? '#d9e1f2' : '#a6aebe'
            filter = <FilterBtn $first={idx === 0} />
        } else {
            bg = '#c6bc9f'
        }
    }
    if (row > 1 && row <= 11) {
        if (col === 'A') {
            text = DATES[row - 2]
            align = 'flex-end'
        }
        if (col === 'B') text = KINDS[row - 2]
        if (col === 'C') text = TIMES[row - 2]
    }
    if (col === 'F' && (row === 2 || row === 3)) {
        text = row === 2 ? 'デイ' : 'ナイト'
        bg = '#c1aea3'
        bold = true
        align = 'center'
    }
    if (PRICES[row]?.[col]) {
        text = PRICES[row][col]
        align = 'flex-end'
    }
    if (col === 'F' && row <= 3) rule += 'border-right: 1.5px solid #111;'
    if (row === 1 && idx >= 5 && idx < 9) rule += 'border-bottom: 1.5px solid #111;'
    if (row === 1 && idx >= 6 && idx < 9) rule += 'border-right-color: #c6bc9f;'
    if (idx < 4 && row === 1) rule += 'border-right-color: #a6aebe;'
    if (col === 'F' && row === 2) rule += 'border-bottom-color: #c1aea3;'

    return (
        <Cell $bg={bg} $line={line} $align={align} $bold={bold} $rule={rule}>
            {text}
            {filter}
        </Cell>
    )
}

const App = () => {
    const rows = Array.from({ length: 21 }, (_, i) => i + 1)

    return (
        <Page>
            <GlobalStyle />
            <Window>
                <TitleBar>
                    <TitleItem $left={18}><ExcelLogo /></TitleItem>
                    <TitleItem $left={21}>自動保存</TitleItem>
                    <Toggle>オン<i /></Toggle>
                    <TitleItem $left={16}><UndoIcon /><Chevron c="#fff" w={9} /></TitleItem>
                    <TitleItem $left={11} $dim><RedoIcon /><Chevron c="#fff" w={9} /></TitleItem>
                    <TitleItem $w={40}><CameraIcon /></TitleItem>
                    <TitleItem $left={8} $w={14}><Chevron c="#fff" w={9} /></TitleItem>
                    <TitleItem $left={29} $w={356} $start>
                        <DocName>数式の生成.xlsx&nbsp;•&nbsp;保存済み</DocName>
                        <Chevron c="#fff" w={11} />
                    </TitleItem>
                    <SearchBox><MagnifierIcon />検索</SearchBox>
                    <TitleItem $left={494}><AvatarIcon /></TitleItem>
                    <TitleItem $left={14} $w={60}><WinMin /></TitleItem>
                    <TitleItem $w={60}><WinMax /></TitleItem>
                    <TitleItem $w={60}><WinClose /></TitleItem>
                </TitleBar>

                <TabRow>
                    <Tab $w={70} $ls={-1.6}>ファイル</Tab>
                    <Tab $w={66} $active $ls={-1.2}>ホーム</Tab>
                    <Tab $w={58}>挿入</Tab>
                    <Tab $w={60}>描画</Tab>
                    <Tab $w={138} $ls={-1}>ページレイアウト</Tab>
                    <Tab $w={60}>数式</Tab>
                    <Tab $w={65} $ls={-0.8}>データ</Tab>
                    <Tab $w={58}>校閲</Tab>
                    <Tab $w={58}>表示</Tab>
                    <Tab $w={58}>開発</Tab>
                    <Tab $w={60} $ls={-0.8}>ヘルプ</Tab>
                    <RowActions>
                        <CommentBtn><CommentIcon />コメント</CommentBtn>
                        <ShareBtn><ShareIcon />共有<Chevron c="#fff" w={8} /></ShareBtn>
                    </RowActions>
                </TabRow>

                <RibbonWrap>
                    <Ribbon>
                        <Group $w={143}>
                            <Body $pl={8}>
                                <Big $w={70}>
                                    <BigIcon><PasteIcon /></BigIcon>
                                    <BigNote $mt={1}><Tight $ls={-1.5}>貼り付け</Tight></BigNote>
                                    <BigNote $mt={9}><Chevron /></BigNote>
                                </Big>
                                <Column>
                                    <Line><Slot $w={22}><ScissorsIcon /></Slot></Line>
                                    <Line><Slot $w={22}><CopyIcon /></Slot><Slot $w={14} $ml={11}><Chevron /></Slot></Line>
                                    <Line><Slot $w={22}><BrushIcon /></Slot></Line>
                                </Column>
                            </Body>
                            <GroupLabel $ls={-2.1} $pr={16}>クリップボード</GroupLabel>
                            <Launcher><LauncherIcon /></Launcher>
                        </Group>

                        <Group $w={346}>
                            <Body $pl={11} $pt={11}>
                                <Column $gap={10}>
                                    <Line $h={30}>
                                        <Select $w={209}><span>游ゴシック</span><Chevron /></Select>
                                        <Select $w={49} $ml={4}>11<Chevron /></Select>
                                        <Slot $w={30} $ml={2}><GrowIcon /></Slot>
                                        <Slot $w={30} $ml={4}><GrowIcon down /></Slot>
                                    </Line>
                                    <Line $h={30}>
                                        <Slot $w={30} $on><BoldGlyph>B</BoldGlyph></Slot>
                                        <Slot $w={32}><ItalicGlyph>I</ItalicGlyph></Slot>
                                        <Slot $w={34}><UnderGlyph>U</UnderGlyph></Slot>
                                        <Slot $w={14}><Chevron /></Slot>
                                        <Divider $ml={6} />
                                        <Slot $w={30}><BorderIcon /></Slot>
                                        <Slot $w={20}><Chevron /></Slot>
                                        <Divider $ml={3} />
                                        <Slot $w={34}><FillIcon /></Slot>
                                        <Slot $w={14}><Chevron /></Slot>
                                        <Slot $w={36}><FontColorIcon /></Slot>
                                        <Slot $w={14}><Chevron /></Slot>
                                        <Divider $ml={6} />
                                        <Slot $w={34}><PhoneticIcon /></Slot>
                                        <Slot $w={14}><Chevron /></Slot>
                                    </Line>
                                </Column>
                            </Body>
                            <GroupLabel $ls={-0.9} $pr={19}>フォント</GroupLabel>
                            <Launcher><LauncherIcon /></Launcher>
                        </Group>

                        <Group $w={254}>
                            <Body $pl={11} $pt={11}>
                                <Column $gap={10} $w={166}>
                                    <Line $h={30}>
                                        <Slot $w={30}><Lines items={[[2, 18, 3], [4, 16, 8], [2, 18, 13]]} /></Slot>
                                        <Slot $w={30} $ml={2} $on><Lines items={[[2, 18, 5], [4, 16, 10], [2, 18, 15]]} /></Slot>
                                        <Slot $w={30} $ml={2}><Lines items={[[2, 18, 8], [4, 16, 13], [2, 18, 18]]} /></Slot>
                                        <Slot $w={30} $ml={2}><OrientIcon /></Slot>
                                        <Slot $w={12}><Chevron /></Slot>
                                    </Line>
                                    <Line $h={30}>
                                        <Slot $w={30}><Lines items={[[1, 19, 3], [1, 13, 8], [1, 19, 13], [1, 13, 18]]} /></Slot>
                                        <Slot $w={30} $ml={2} $on><Lines items={[[1, 19, 3], [4, 16, 8], [1, 19, 13], [4, 16, 18]]} /></Slot>
                                        <Slot $w={30} $ml={2}><Lines items={[[1, 19, 3], [7, 19, 8], [1, 19, 13], [7, 19, 18]]} /></Slot>
                                        <Slot $w={30} $ml={2}><IndentIcon out /></Slot>
                                        <Slot $w={30}><IndentIcon /></Slot>
                                    </Line>
                                </Column>
                                <RuledColumn $gap={10} $w={70}>
                                    <Line $h={30}><Slot $w={24}><WrapIcon /></Slot></Line>
                                    <Line $h={30}><Slot $w={24}><MergeIcon /></Slot><Slot $w={14} $ml={9}><Chevron /></Slot></Line>
                                </RuledColumn>
                            </Body>
                            <GroupLabel $pr={22}>配置</GroupLabel>
                            <Launcher><LauncherIcon /></Launcher>
                        </Group>

                        <Group $w={133}>
                            <Body $pl={11} $pt={1}>
                                <Column>
                                    <Select $w={113}>標準<Chevron /></Select>
                                    <Line>
                                        <Slot $w={28} $ml={2}><CurrencyIcon /></Slot>
                                        <Slot $w={18}><Chevron /></Slot>
                                        <Slot $w={38}><PctGlyph>%</PctGlyph></Slot>
                                        <Slot $w={26}><CommaIcon /></Slot>
                                    </Line>
                                    <Line>
                                        <Slot $w={28} $ml={2}><DecimalIcon /></Slot>
                                        <Slot $w={32} $ml={1}><DecimalIcon more /></Slot>
                                    </Line>
                                </Column>
                            </Body>
                            <GroupLabel $pr={24}>数値</GroupLabel>
                            <Launcher><LauncherIcon /></Launcher>
                        </Group>

                        <Group $w={215}>
                            <Body $pl={15}>
                                <Column>
                                    <Line><CondIcon /><Inline $ml={5}><Tight $ls={-0.5}>条件付き書式</Tight><Chevron w={8} /></Inline></Line>
                                    <Line><TableFmtIcon /><Inline $ml={5}><Tight $ls={-1.7}>テーブルとして書式設定</Tight><Chevron w={8} /></Inline></Line>
                                    <Line><CellStyleIcon /><Inline $ml={5}><Tight $ls={-2.3}>セルのスタイル</Tight><Chevron w={8} /></Inline></Line>
                                </Column>
                            </Body>
                            <GroupLabel $ls={-1}>スタイル</GroupLabel>
                        </Group>

                        <Group $w={123}>
                            <Body $pl={16}>
                                <Column>
                                    <Line><InsertIcon /><Inline $ml={4} $w={52}>挿入</Inline><Chevron w={8} /></Line>
                                    <Line><DeleteIcon /><Inline $ml={4} $w={52}>削除</Inline><Chevron w={8} /></Line>
                                    <Line><FormatIcon /><Inline $ml={4}>書式<Chevron w={8} /></Inline></Line>
                                </Column>
                            </Body>
                            <GroupLabel>セル</GroupLabel>
                        </Group>

                        <Group $w={208}>
                            <Body $pl={15}>
                                <Column $w={64}>
                                    <Line><SumIcon /><Slot $w={14} $ml={14}><Chevron w={8} /></Slot></Line>
                                    <Line><FillDownIcon /><Slot $w={14} $ml={3}><Chevron w={8} /></Slot></Line>
                                    <Line><EraserIcon /><Slot $w={14} $ml={2}><Chevron w={8} /></Slot></Line>
                                </Column>
                                <Big $w={66}>
                                    <BigIcon><SortIcon /></BigIcon>
                                    <Tight $ls={-2.4}>並べ替えと</Tight>
                                    <Inline><Tight $ls={-2.7}>フィルター</Tight><Chevron w={8} /></Inline>
                                </Big>
                                <Big $w={52} $pt={6} $ml={2}>
                                    <BigIcon><SearchBigIcon /></BigIcon>
                                    検索と
                                    <Inline>選択<Chevron w={8} /></Inline>
                                </Big>
                            </Body>
                            <GroupLabel>編集</GroupLabel>
                        </Group>

                        <Group $w={72}>
                            <Body>
                                <Big $w={72}>
                                    <BigIcon><AddinIcon /></BigIcon>
                                    アド
                                    <br />
                                    イン
                                </Big>
                            </Body>
                            <GroupLabel $ls={-1.2}>アドイン</GroupLabel>
                        </Group>

                        <Group $w={131}>
                            <Body $pl={14}>
                                <Big $w={46}>
                                    <BigIcon><AnalysisIcon /></BigIcon>
                                    <Tight $ls={-0.5}>データ</Tight>
                                    分析
                                </Big>
                                <Big $w={60} $ml={2}>
                                    <BigIcon><CopilotIcon /></BigIcon>
                                    <BigNote $mt={1}>Copilot</BigNote>
                                    <BigNote $mt={2}><Chevron w={8} /></BigNote>
                                </Big>
                            </Body>
                            <GroupLabel />
                        </Group>

                        <Group $w={117}>
                            <Body>
                                <Big $w={117}>
                                    <BigIcon><PdfIcon /></BigIcon>
                                    PDF を作成し
                                    <Tight $ls={-0.6}>てリンクを共有</Tight>
                                </Big>
                            </Body>
                            <GroupLabel>Adobe Acrobat</GroupLabel>
                        </Group>

                        <Group $w={85}>
                            <Body>
                                <Big $w={85}>
                                    <BigIcon><FlaskIcon /></BigIcon>
                                    Excel
                                    <br />
                                    Labs
                                </Big>
                            </Body>
                            <GroupLabel>Excel Labs</GroupLabel>
                        </Group>

                        <Group $w={71} $noline>
                            <MoreChevron><Chevron w={13} /></MoreChevron>
                        </Group>
                    </Ribbon>
                </RibbonWrap>

                <FormulaBar>
                    <NameBox>A1<Chevron c="#333" w={13} /></NameBox>
                    <Dots $w={27}><i /><i /><i /></Dots>
                    <FnBox>
                        <XMark /><CheckMark />
                        <i>fx</i>
                        <Chevron c="#aaa" w={11} />
                    </FnBox>
                    <InputBox>利用日<Chevron c="#333" w={14} /></InputBox>
                </FormulaBar>

                <SheetArea>
                    <GridClip>
                        <Grid>
                            <Corner><i /></Corner>
                            {COLS.map((c, i) => (
                                <ColHead key={c} $sel={i < 9}>{c}</ColHead>
                            ))}
                            {rows.map(r => (
                                <React.Fragment key={r}>
                                    <RowHead $sel={r <= 11}>{r}</RowHead>
                                    {COLS.map((c, i) => (
                                        <SheetCell key={c} row={r} col={c} idx={i} />
                                    ))}
                                </React.Fragment>
                            ))}
                        </Grid>
                        <Selection />
                        <QuickBtn><SparkleIcon /></QuickBtn>
                    </GridClip>
                    <VScroll>
                        <Arrowhead $dir="up" />
                        <VThumb />
                        <Arrowhead $dir="down" />
                    </VScroll>
                </SheetArea>

                <SheetBar>
                    <NavSlot $w={14} $left={27}><Nav /></NavSlot>
                    <NavSlot $w={14} $left={27}><Nav right /></NavSlot>
                    <SheetTab>クロス表から抽出</SheetTab>
                    <TabDivider />
                    <NavSlot $w={20} $left={49}><PlusIcon /></NavSlot>
                    <NavSlot $w={10} $left={790}><Dots $w={10}><i /><i /><i /></Dots></NavSlot>
                    <HScroll>
                        <Arrowhead $dir="left" />
                        <HThumb />
                        <Arrowhead $dir="right" />
                    </HScroll>
                </SheetBar>

                <StatusBar>
                    <StatusItem $left={14} $w={85}>準備完了</StatusItem>
                    <StatusItem><MacroIcon /></StatusItem>
                    <StatusItem $left={20} $w={205}><AccessIcon /><Tight $ls={-1.2}>アクセシビリティ: 問題ありません</Tight></StatusItem>
                    <StatusItem $left={775} $w={155}><Tight $ls={1}>平均: 29376.25</Tight></StatusItem>
                    <StatusItem $w={128}>データの個数: 45</StatusItem>
                    <StatusItem $w={119}><Tight $ls={0.9}>合計: 470020</Tight></StatusItem>
                    <ViewBtn $on><NormalView /></ViewBtn>
                    <ViewBtn><LayoutView /></ViewBtn>
                    <ViewBtn><PageView /></ViewBtn>
                    <StatusItem $left={12}><ZoomOut /></StatusItem>
                    <Slider />
                    <ZoomIn />
                    <StatusItem $left={16}>100%</StatusItem>
                </StatusBar>
            </Window>

            <ArrowLayer width="1920" height="1080" viewBox="0 0 1920 1080">
                <polygon points="81,325 857,678 856,669 884,701 841,701 848,695 78,329" fill="#f00" />
            </ArrowLayer>
            <RedFrame />
            <StepBadge $x={317} $y={90}>⑬</StepBadge>
            <StepBadge $x={831} $y={626}>⑫</StepBadge>
        </Page>
    )
}

export default App
